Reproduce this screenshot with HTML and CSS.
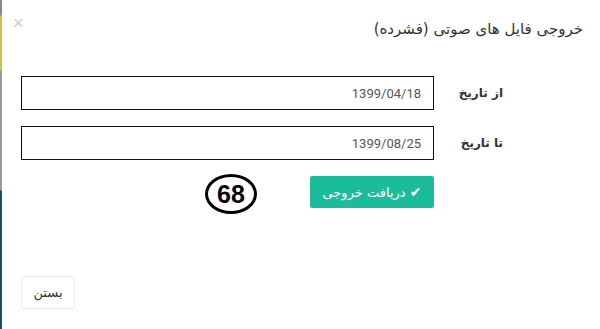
FILE: index.html
```html
<!DOCTYPE html>
<html lang="fa" dir="rtl">
<head>
  <meta charset="UTF-8">
  <meta name="viewport" content="width=device-width, initial-scale=1.0">
  <title>خروجی فایل های صوتی</title>
  <link rel="stylesheet" href="styles.css">
</head>
<body>
  <div class="screen">
    <div class="modal">
      <div class="modal-header">
        <h4 class="modal-title">خروجی فایل های صوتی (فشرده)</h4>
        <button type="button" class="close">&times;</button>
      </div>
      <form class="modal-body">
        <div class="form-row">
          <label for="fromDate">از تاریخ</label>
          <input id="fromDate" type="text" value="1399/04/18">
        </div>
        <div class="form-row">
          <label for="toDate">تا تاریخ</label>
          <input id="toDate" type="text" value="1399/08/25">
        </div>
        <div class="form-row actions">
          <span class="spacer"></span>
          <div class="action-cell">
            <button type="submit" class="btn btn-export"><span class="tick">&#10004;</span> دریافت خروجی</button>
            <span class="badge-num">68</span>
          </div>
        </div>
      </form>
      <div class="modal-footer">
        <button type="button" class="btn btn-close">بستن</button>
      </div>
    </div>
    <div class="page-edge"></div>
  </div>
</body>
</html>
```

FILE: styles.css
```css
body {
  margin: 0;
  background: #ffffff;
  font-family: "DejaVu Sans", "Noto Sans", sans-serif;
  color: #333333;
}
.screen {
  display: flex;
  height: 329px;
  overflow: hidden;
}
.page-edge {
  width: 2px;
  background: linear-gradient(#8a8a84 0, #8a8a84 15px, #c9c24a 16px, #c9c24a 70px, #9a9a94 71px, #9a9a94 190px, #1f4c66 191px, #1f4c66 100%);
}
.modal {
  flex: 1;
  background: #ffffff;
}
.modal-header {
  display: flex;
  justify-content: space-between;
  align-items: center;
  padding: 14px 17px 0 11px;
  height: 30px;
}
.modal-title {
  margin: 0;
  font-size: 15px;
  font-weight: normal;
  color: #333333;
}
.close {
  background: none;
  border: none;
  padding: 0;
  font-size: 18px;
  line-height: 1;
  color: #c8c8c8;
  cursor: pointer;
  margin-top: -12px;
}
.modal-body {
  padding: 32px 17px 0 0;
  margin: 0;
}
.form-row {
  display: flex;
  align-items: center;
  margin-bottom: 16px;
}
.form-row label,
.form-row .spacer {
  width: 149px;
  box-sizing: border-box;
  padding-right: 80px;
  font-size: 12px;
  font-weight: bold;
  color: #333333;
}
.form-row input {
  width: 413px;
  height: 34px;
  box-sizing: border-box;
  border: 1.5px solid #111111;
  padding: 0 12px;
  font-family: Roboto, "Liberation Sans", sans-serif;
  font-size: 13px;
  color: #555555;
  background: #ffffff;
  direction: rtl;
}
.actions {
  align-items: flex-start;
}
.action-cell {
  position: relative;
  width: 413px;
  height: 40px;
}
.btn {
  font-family: "DejaVu Sans", "Noto Sans", sans-serif;
  box-sizing: border-box;
  border-radius: 2px;
  cursor: pointer;
}
.btn-export {
  width: 124px;
  height: 32px;
  border: none;
  background: #1abc9c;
  color: #ffffff;
  font-size: 13px;
}
.tick {
  font-size: 14px;
}
.badge-num {
  position: absolute;
  top: -2px;
  right: 177px;
  width: 46px;
  height: 34px;
  border: 3px solid #000000;
  border-radius: 50%;
  text-align: center;
  line-height: 34px;
  font-family: "Liberation Sans", Arial, sans-serif;
  font-size: 25px;
  font-weight: bold;
  color: #000000;
}
.modal-footer {
  padding: 44px 0 0 19px;
  text-align: left;
}
.btn-close {
  width: 54px;
  height: 33px;
  background: #ffffff;
  border: 1px solid #ececec;
  color: #333333;
  font-size: 13px;
}
```
